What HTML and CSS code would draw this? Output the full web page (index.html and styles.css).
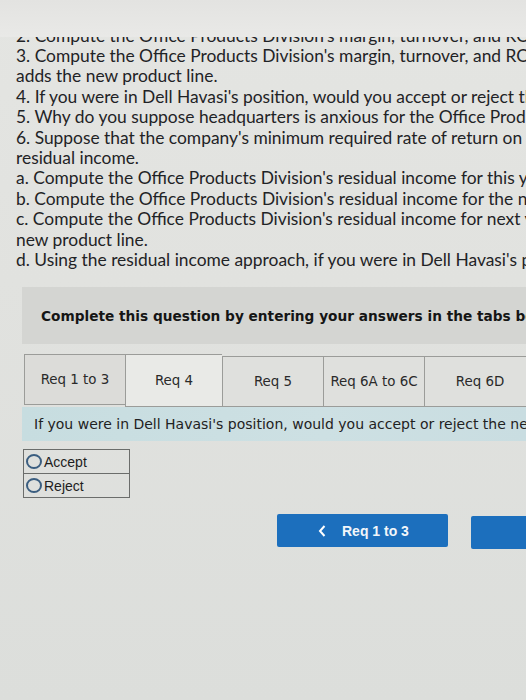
FILE: index.html
```html
<!DOCTYPE html>
<html>
<head>
<meta charset="utf-8">
<link rel="stylesheet" href="styles.css">
</head>
<body>
<div class="page">
  <div class="topband"></div>
  <div class="problem">
    <div class="cutline"><div class="line">2. Compute the Office Products Division's margin, turnover, and ROI for next year if it</div></div>
    <div class="line">3. Compute the Office Products Division's margin, turnover, and ROI for next year if it</div>
    <div class="line">adds the new product line.</div>
    <div class="line">4. If you were in Dell Havasi's position, would you accept or reject the new product line?</div>
    <div class="line">5. Why do you suppose headquarters is anxious for the Office Products Division to add</div>
    <div class="line">6. Suppose that the company's minimum required rate of return on operating assets is</div>
    <div class="line">residual income.</div>
    <div class="line">a. Compute the Office Products Division's residual income for this year.</div>
    <div class="line">b. Compute the Office Products Division's residual income for the new product line by</div>
    <div class="line">c. Compute the Office Products Division's residual income for next year assuming it adds the</div>
    <div class="line">new product line.</div>
    <div class="line">d. Using the residual income approach, if you were in Dell Havasi's position, would you</div>
  </div>

  <div class="instructions">Complete this question by entering your answers in the tabs below.</div>

  <div class="tabs">
    <div class="tab">Req 1 to 3</div>
    <div class="tab active">Req 4</div>
    <div class="tab">Req 5</div>
    <div class="tab">Req 6A to 6C</div>
    <div class="tab">Req 6D</div>
  </div>

  <div class="prompt">If you were in Dell Havasi's position, would you accept or reject the new product line?</div>

  <div class="choices">
    <div class="choice"><span class="radio"></span><span class="label">Accept</span></div>
    <div class="choice"><span class="radio"></span><span class="label">Reject</span></div>
  </div>

  <div class="nav">
    <div class="btn prev">
      <svg class="chev" width="8" height="12" viewBox="0 0 8 12"><path d="M6.5 1 L2 6 L6.5 11" fill="none" stroke="#ffffff" stroke-width="2"/></svg>
      <span>Req 1 to 3</span>
    </div>
    <div class="btn next"></div>
  </div>
</div>
</body>
</html>
```
FILE: styles.css
```css
html, body {
  margin: 0;
  padding: 0;
}
body {
  width: 526px;
  height: 700px;
  overflow: hidden;
  background: linear-gradient(180deg, #e4e5e2 0%, #e1e2df 40%, #dcdedb 100%);
}
.page {
  width: 526px;
  overflow: hidden;
}
.topband {
  height: 37px;
  background: linear-gradient(180deg, #e3e3e1 0%, #e9e9e7 100%);
}
.problem {
  padding-left: 16px;
  font-family: "Lato", "Open Sans", sans-serif;
  font-size: 17.4px;
  color: #1f2326;
}
.line {
  height: 20.4px;
  line-height: 20.4px;
  white-space: nowrap;
}
.cutline {
  height: 9px;
  overflow: hidden;
  display: flex;
  flex-direction: column;
  justify-content: flex-end;
}
.cutline .line {
  flex: none;
}
.instructions {
  margin: 17px 0 0 22px;
  height: 57px;
  padding-left: 19px;
  display: flex;
  align-items: center;
  background: #d4d5d2;
  font-family: "DejaVu Sans", Verdana, sans-serif;
  font-weight: bold;
  font-size: 13.7px;
  color: #151515;
  white-space: nowrap;
}
.tabs {
  margin: 10px 0 0 24px;
  display: flex;
  width: 540px;
}
.tab {
  flex: none;
  width: 100px;
  height: 49px;
  display: flex;
  align-items: center;
  justify-content: center;
  background: #dcdcd9;
  border: 1px solid #9b9c99;
  border-right: none;
  font-family: "DejaVu Sans", Verdana, sans-serif;
  font-size: 13.4px;
  color: #2a2a2a;
  white-space: nowrap;
}
.tab.active {
  background: #e9eae7;
  height: 51px;
  width: 96px;
}
.tab:nth-child(3), .tab:nth-child(4), .tab:nth-child(5) {
  margin-top: 2px;
  background: #dfe0dd;
}
.tab:nth-child(5) {
  width: 110px;
}
.prompt {
  margin: 0 0 0 22px;
  height: 34px;
  padding-left: 12px;
  display: flex;
  align-items: center;
  background: linear-gradient(90deg, #c7dde0 0%, #cde0e3 60%, #c9dde1 100%);
  font-family: "DejaVu Sans", Verdana, sans-serif;
  font-size: 14px;
  color: #1f2222;
  white-space: nowrap;
}
.choices {
  margin: 8px 0 0 23px;
  width: 105px;
  border: 1px solid #6b6d6b;
  border-bottom: none;
}
.choice {
  height: 23px;
  display: flex;
  align-items: center;
  border-bottom: 1px solid #6b6d6b;
  font-family: "Liberation Sans", Arial, sans-serif;
  font-size: 14px;
  color: #1d1d1d;
}
.radio {
  width: 12px;
  height: 11px;
  border: 2px solid #3b5e80;
  border-radius: 50%;
  margin: 0 2px 0 2px;
  flex: none;
}
.nav {
  margin: 16px 0 0 277px;
  display: flex;
  gap: 23px;
  width: 400px;
}
.btn {
  height: 33px;
  background: #1c6fbd;
  border-radius: 2px;
  display: flex;
  align-items: center;
  flex: none;
}
.btn.prev {
  width: 171px;
  font-family: "Liberation Sans", Arial, sans-serif;
  font-weight: bold;
  font-size: 14px;
  color: #f2f6fa;
}
.btn.prev .chev {
  margin: 0 16px 0 41px;
}
.btn.next {
  width: 120px;
  margin-top: 2px;
}
```
